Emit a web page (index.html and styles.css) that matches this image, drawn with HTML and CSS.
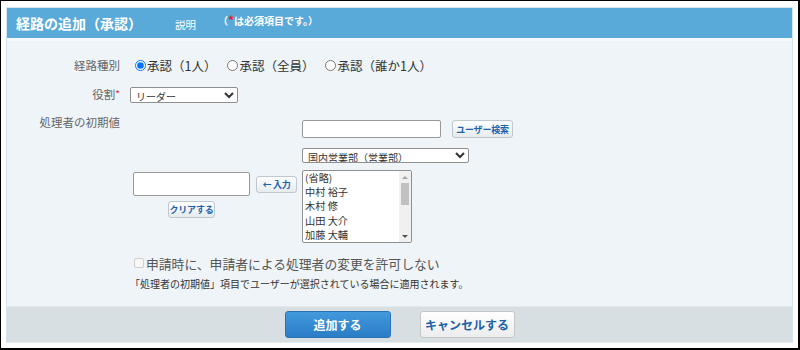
FILE: index.html
```html
<!DOCTYPE html>
<html lang="ja">
<head>
<meta charset="utf-8">
<link rel="stylesheet" href="styles.css">
</head>
<body>
<div class="frame">
  <div class="panel">
    <div class="header">
      <h1 class="title">経路の追加（承認）</h1>
      <span class="help">説明</span>
      <span class="req-note">（<span class="req-star">*</span>は必須項目です。）</span>
    </div>
    <div class="content">
      <div class="row row-kind">
        <div class="label">経路種別</div>
        <div class="value radios">
          <label class="radio"><input type="radio" name="kind" checked>承認（1人）</label>
          <label class="radio"><input type="radio" name="kind">承認（全員）</label>
          <label class="radio"><input type="radio" name="kind">承認（誰か1人）</label>
        </div>
      </div>
      <div class="row row-role">
        <div class="label">役割<span class="star">*</span></div>
        <div class="value">
          <select class="sel sel-role"><option>リーダー</option></select>
        </div>
      </div>
      <div class="row row-user">
        <div class="label label-top">処理者の初期値</div>
        <div class="value picker">
          <div class="picked">
            <div class="picked-line">
              <input type="text" class="txt txt-picked">
              <button class="mini btn-in">← 入力</button>
            </div>
            <button class="mini btn-clear">クリアする</button>
          </div>
          <div class="source">
            <div class="search-line">
              <input type="text" class="txt txt-search">
              <button class="mini btn-search">ユーザー検索</button>
            </div>
            <select class="sel sel-dept"><option>国内営業部（営業部）</option></select>
            <div class="listbox" role="listbox">
              <div class="options">
                <div class="opt" role="option">(省略)</div>
                <div class="opt" role="option">中村 裕子</div>
                <div class="opt" role="option">木村 修</div>
                <div class="opt" role="option">山田 大介</div>
                <div class="opt" role="option">加藤 大輔</div>
              </div>
              <div class="scrollbar">
                <span class="arrow up"></span>
                <span class="thumb"></span>
                <span class="track-rest"></span>
                <span class="arrow down"></span>
              </div>
            </div>
          </div>
        </div>
      </div>
      <div class="row row-check">
        <div class="label"></div>
        <div class="value">
          <label class="check"><input type="checkbox" class="cb">申請時に、申請者による処理者の変更を許可しない</label>
        </div>
      </div>
      <div class="row row-note">
        <div class="label"></div>
        <div class="value note">「処理者の初期値」項目でユーザーが選択されている場合に適用されます。</div>
      </div>
    </div>
    <div class="footer">
      <button class="btn btn-primary">追加する</button>
      <button class="btn btn-cancel">キャンセルする</button>
    </div>
  </div>
</div>
</body>
</html>
```

FILE: styles.css
```css
html, body {
  margin: 0;
  padding: 0;
  background: #fff;
}
body {
  font-family: "Noto Sans CJK JP", "Noto Sans", sans-serif;
  color: #333;
}
.frame {
  width: 800px;
  height: 350px;
  box-sizing: border-box;
  border-style: solid;
  border-color: #000;
  border-width: 1px 2px 2px 1px;
  background: #fff;
  padding: 6px 0 0 5px;
}
.panel {
  width: 787px;
  box-sizing: border-box;
  border: 1px solid #d4e4f0;
  border-bottom-color: #e6ebee;
}
.header {
  height: 30px;
  background: #5aaad9;
  border-bottom: 3px solid #f6f9fb;
  display: flex;
  align-items: center;
  padding-left: 9px;
  color: #fff;
}
.title {
  margin: 0;
  font-size: 14px;
  font-weight: bold;
  line-height: 30px;
  width: 159px;
  white-space: nowrap;
}
.help {
  font-size: 10.5px;
  width: 43px;
  padding-top: 2px;
}
.req-note {
  align-self: flex-start;
  padding-top: 5px;
  font-size: 10px;
  font-weight: bold;
  line-height: 14px;
  white-space: nowrap;
}
.req-star {
  color: #e4202a;
  font-size: 12px;
}
.star {
  color: #e4202a;
  font-size: 10px;
  vertical-align: top;
}
.content {
  height: 265px;
  box-sizing: border-box;
  background: #eff4f8;
  padding-top: 14px;
}
.row {
  display: flex;
}
.label {
  width: 123px;
  flex: none;
  box-sizing: border-box;
  padding-right: 10px;
  text-align: right;
  font-size: 11.5px;
  color: #666;
}
.value {
  flex: 1;
}
.row-kind {
  height: 20px;
  align-items: center;
}
.radios {
  display: flex;
  align-items: center;
  font-size: 12.5px;
  color: #333;
}
.radio {
  display: flex;
  align-items: center;
  margin-right: 6px;
}
.radio input {
  width: 11px;
  height: 11px;
  margin: 0 1px 0 5px;
}
.row-role {
  margin-top: 11px;
  height: 16px;
  align-items: center;
}
.sel {
  font-family: inherit;
  font-size: 10px;
  color: #333;
  background: #fff;
  border: 1px solid #8f8f8f;
  border-radius: 2px;
  padding: 0 1px;
  box-sizing: border-box;
}
.sel-role {
  width: 108px;
  height: 16px;
}
.row-user {
  margin-top: 13px;
}
.label-top {
  line-height: 14px;
}
.picker {
  display: flex;
  gap: 5px;
}
.picked {
  width: 164px;
  margin-left: 3px;
  padding-top: 57px;
}
.picked-line {
  display: flex;
  align-items: center;
  gap: 6px;
}
.txt {
  box-sizing: border-box;
  border: 1px solid #999;
  border-radius: 2px;
  background: #fff;
  margin: 0;
  padding: 0 3px;
  font-family: inherit;
}
.txt-picked {
  width: 117px;
  height: 24px;
}
.mini {
  box-sizing: border-box;
  height: 17px;
  padding: 0;
  margin: 0;
  border: 1px solid #bfc8cf;
  border-radius: 3px;
  background: linear-gradient(#fdfefe, #e6ebef);
  color: #1b63ad;
  font-family: inherit;
  font-size: 9px;
  font-weight: bold;
  line-height: 15px;
  white-space: nowrap;
  letter-spacing: -0.2px;
}
.btn-in {
  width: 41px;
}
.btn-clear {
  display: block;
  width: 47px;
  margin: 5px 0 0 35px;
}
.source {
  padding-top: 5px;
  display: flex;
  flex-direction: column;
  align-items: flex-start;
}
.search-line {
  display: flex;
  gap: 11px;
}
.txt-search {
  width: 139px;
  height: 18px;
}
.btn-search {
  width: 61px;
  height: 18px;
}
.sel-dept {
  margin-top: 10px;
  width: 167px;
  height: 15px;
}
.listbox {
  margin-top: 7px;
  width: 110px;
  height: 73px;
  box-sizing: border-box;
  border: 1px solid #8f8f8f;
  border-radius: 2px;
  background: #fff;
  display: flex;
  overflow: hidden;
}
.options {
  flex: 1;
  font-size: 10.2px;
  color: #333;
}
.opt {
  padding-left: 2px;
  height: 14.2px;
  line-height: 14.2px;
  white-space: nowrap;
}
.scrollbar {
  width: 12px;
  flex: none;
  background: #f0f0f0;
  display: flex;
  flex-direction: column;
  align-items: center;
}
.arrow {
  width: 12px;
  height: 12px;
  flex: none;
  display: flex;
  align-items: center;
  justify-content: center;
}
.arrow::before {
  content: "";
  width: 0;
  height: 0;
  border-left: 3px solid transparent;
  border-right: 3px solid transparent;
}
.arrow.up::before {
  border-bottom: 3px solid #a3a3a3;
}
.arrow.down::before {
  border-top: 3px solid #505050;
}
.thumb {
  width: 8px;
  height: 22px;
  background: #c1c1c1;
  flex: none;
}
.track-rest {
  flex: 1;
}
.row-check {
  margin-top: 12px;
  height: 16px;
  align-items: center;
}
.check {
  display: flex;
  align-items: center;
  font-size: 12.8px;
  color: #555;
}
.cb {
  -webkit-appearance: none;
  appearance: none;
  width: 10px;
  height: 10px;
  margin: 0 2px 0 4px;
  border: 1px solid #cfcfcf;
  border-radius: 2px;
  background: #f7f7f7;
}
.row-note {
  margin-top: 5px;
  height: 14px;
  align-items: center;
}
.note {
  font-size: 10px;
  color: #333;
}
.footer {
  height: 36px;
  box-sizing: border-box;
  background: #d8dfe3;
  border-top: 1px solid #e2e8eb;
  display: flex;
  justify-content: center;
  gap: 29px;
  padding-top: 4px;
}
.btn {
  box-sizing: border-box;
  height: 27px;
  border-radius: 3px;
  font-family: inherit;
  font-size: 12px;
  font-weight: bold;
  padding: 0;
}
.btn-primary {
  width: 106px;
  border: 1px solid #2a72b4;
  background: linear-gradient(#4299dc, #2a7dc6);
  color: #fff;
}
.btn-cancel {
  width: 95px;
  border: 1px solid #c4c8cb;
  background: linear-gradient(#ffffff, #ebeced);
  color: #1d62a8;
}
```
